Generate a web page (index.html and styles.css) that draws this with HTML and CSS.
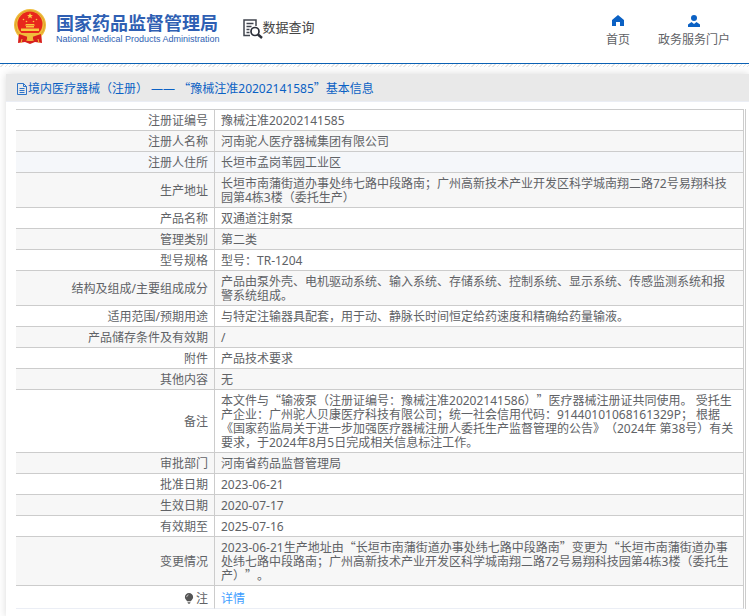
FILE: index.html
```html
<!DOCTYPE html>
<html lang="zh-CN">
<head>
	<meta charset="UTF-8">
	<meta name="viewport" content="width=device-width, initial-scale=1.0">
	<title>国家药品监督管理局 数据查询</title>
	<link rel="stylesheet" href="styles.css">
</head>
<body>
	<header class="header">
		<a class="brand" href="#">
			<svg class="emblem" viewBox="0 0 32 36" aria-hidden="true">
				<path d="M5 22L27 22L28 34L21 33L16 35L11 33L4 34Z" fill="#d8201c"/>
				<circle cx="16" cy="16" r="16" fill="#f0bd3c"/>
				<circle cx="16" cy="16" r="14.5" fill="none" stroke="#dfa32c"/>
				<circle cx="16" cy="15" r="12.5" fill="#e8281c"/>
				<path d="M16 4l.9 2H19l-1.700 1.300.7 2.200-2-1.300-2 1.300.7-2.200L13 6h2.100z" fill="#f9d548"/>
				<g fill="#f9c840">
					<circle cx="9.500" cy="10.500" r=".8"/>
					<circle cx="12.500" cy="12.500" r=".8"/>
					<circle cx="19.500" cy="12.500" r=".8"/>
					<circle cx="22.500" cy="10.500" r=".8"/>
					<path d="M12 15h8l1 1.500h-10zM12 17h8v1.500h-8zM7 19.500h18V22H7z"/>
				</g>
				<path d="M4 24h24l-3 4H7z" fill="#f0bd3c"/>
				<path d="M5 25q6 2 9 3l-2 4-7 1zM27 25q-6 2-9 3l2 4 7 1z" fill="#d8201c"/>
				<circle cx="16" cy="29" r="3" fill="#f0bd3c"/>
				<path d="M8 30l-1 4M24 30l1 4" stroke="#f0bd3c"/>
			</svg>
			<span class="brand-text">
				<span class="brand-cn">国家药品监督管理局</span>
				<span class="brand-en">National Medical Products Administration</span>
			</span>
		</a>
		<a class="query" href="#">
			<svg class="query-icon" viewBox="0 0 20 20" aria-hidden="true">
				<path d="M7 16.500H1V1h12v6M3.500 4.500h7M3.500 7.500h5M3.500 10.500h3M3.500 13.500h3" fill="none" stroke="#41454f" stroke-width="1.500"/>
				<circle cx="12" cy="12.500" r="4" fill="#fff" stroke="#2c303a" stroke-width="1.700"/>
				<path d="M15 15.500l4 3.500" stroke="#2c303a" stroke-width="2.500"/>
			</svg>
			数据查询
		</a>
		<nav class="nav">
			<a href="#">
				<svg class="nav-icon" viewBox="0 0 12 12" aria-hidden="true">
					<path d="M6 0l6 5v6H8V7H4v4H0V5z" fill="#0b61c4"/>
				</svg>
				首页
			</a>
			<a href="#">
				<svg class="nav-icon" viewBox="0 0 12 12" aria-hidden="true">
					<circle cx="6" cy="3" r="3" fill="#0b61c4"/>
					<path d="M0 12V9.500L3.500 7 6 9l2.500-2L12 9.500V12z" fill="#0b61c4"/>
				</svg>
				政务服务门户
			</a>
		</nav>
	</header>
	<div class="strip"></div>
	<main class="panel">
		<h1 class="panel-title">
			<svg class="doc-icon" viewBox="0 0 12 12" aria-hidden="true">
				<path d="M1.500 .5h6l3 3v8h-9zM7.500 .5v3h3M3.500 5.500h5M3.500 7.500h5M3.500 9.500h5" fill="none" stroke="#2f74c8"/>
			</svg>
			<span>境内医疗器械（注册） —— <span class="q">“</span>豫械注准20202141585<span class="q">”</span>基本信息</span>
		</h1>
		<div class="table-wrap">
			<table class="info">
				<tbody>
					<tr><th scope="row">注册证编号</th><td>豫械注准20202141585</td></tr>
					<tr><th scope="row">注册人名称</th><td>河南驼人医疗器械集团有限公司</td></tr>
					<tr class="active"><th scope="row">注册人住所</th><td>长垣市孟岗苇园工业区</td></tr>
					<tr><th scope="row">生产地址</th><td>长垣市南蒲街道办事处纬七路中段路南；广州高新技术产业开发区科学城南翔二路72号易翔科技园第4栋3楼（委托生产）</td></tr>
					<tr><th scope="row">产品名称</th><td>双通道注射泵</td></tr>
					<tr><th scope="row">管理类别</th><td>第二类</td></tr>
					<tr><th scope="row">型号规格</th><td>型号：TR-1204</td></tr>
					<tr><th scope="row">结构及组成/主要组成成分</th><td>产品由泵外壳、电机驱动系统、输入系统、存储系统、控制系统、显示系统、传感监测系统和报警系统组成。</td></tr>
					<tr><th scope="row">适用范围/预期用途</th><td>与特定注输器具配套，用于动、静脉长时间恒定给药速度和精确给药量输液。</td></tr>
					<tr><th scope="row">产品储存条件及有效期</th><td>/</td></tr>
					<tr><th scope="row">附件</th><td>产品技术要求</td></tr>
					<tr><th scope="row">其他内容</th><td>无</td></tr>
					<tr><th scope="row">备注</th><td>本文件与<span class="q">“</span>输液泵（注册证编号：豫械注准20202141586）<span class="q">”</span>医疗器械注册证共同使用。 受托生产企业：广州驼人贝康医疗科技有限公司；统一社会信用代码：91440101068161329P； 根据《国家药监局关于进一步加强医疗器械注册人委托生产监督管理的公告》（2024年 第38号）有关要求，于2024年8月5日完成相关信息标注工作。</td></tr>
					<tr><th scope="row">审批部门</th><td>河南省药品监督管理局</td></tr>
					<tr><th scope="row">批准日期</th><td>2023-06-21</td></tr>
					<tr><th scope="row">生效日期</th><td>2020-07-17</td></tr>
					<tr><th scope="row">有效期至</th><td>2025-07-16</td></tr>
					<tr><th scope="row">变更情况</th><td>2023-06-21生产地址由<span class="q">“</span>长垣市南蒲街道办事处纬七路中段路南<span class="q">”</span>变更为<span class="q">“</span>长垣市南蒲街道办事处纬七路中段路南；广州高新技术产业开发区科学城南翔二路72号易翔科技园第4栋3楼（委托生产）<span class="q">”</span>。</td></tr>
					<tr class="note">
						<th scope="row"><svg class="bulb" viewBox="0 0 10 12" aria-hidden="true"><path d="M5 0a4.500 4.500 0 0 1 4.500 4.500C9.500 6.500 7.500 7.500 7 9H3C2.500 7.500.5 6.500.5 4.500A4.500 4.500 0 0 1 5 0zM3.500 10h3v1L5 12l-1.500-1z" fill="#555"/><path d="M2.500 4.500Q2.500 2.500 4.500 2" fill="none" stroke="#ccc"/></svg>注</th>
						<td><a href="#">详情</a></td>
					</tr>
				</tbody>
			</table>
		</div>
	</main>
</body>
</html>
```

FILE: styles.css
```css
* {
	box-sizing: border-box;
}
body {
	margin: 0;
	background: #fff;
	color: #606266;
	font-family: "Noto Sans", "Noto Sans CJK SC", sans-serif;
	font-size: 12px;
	line-height: 14px;
	text-spacing-trim: space-all;
}
a {
	color: inherit;
	text-decoration: none;
}
.header {
	display: flex;
	align-items: flex-start;
	height: 64px;
	padding: 9px 19px 0 14px;
	border-bottom: 1px solid #0b61b4;
}
.strip {
	height: 3px;
	background: repeating-linear-gradient(135deg, #fff 0 2px, #e4e4e4 2px 3px);
}
.brand {
	display: flex;
	gap: 10px;
	color: #2f5fb3;
}
.emblem {
	width: 32px;
	height: 36px;
}
.brand-text {
	display: flex;
	flex-direction: column;
	padding-top: 2px;
	white-space: nowrap;
}
.brand-cn {
	font-family: "Noto Sans CJK SC", sans-serif;
	font-size: 18px;
	font-weight: bold;
	line-height: 22px;
}
.brand-en {
	font-family: "Liberation Sans", sans-serif;
	font-size: 9px;
	line-height: 12px;
}
.query {
	display: flex;
	margin-left: 23px;
	padding-top: 8px;
	color: #444;
	font-size: 13px;
	line-height: 20px;
	white-space: nowrap;
}
.query-icon {
	width: 20px;
	height: 20px;
	margin-top: 2px;
}
.nav {
	display: flex;
	gap: 28px;
	margin-left: auto;
	padding-top: 6px;
	white-space: nowrap;
}
.nav a {
	display: flex;
	flex-direction: column;
	align-items: center;
	gap: 6px;
}
.nav-icon {
	width: 12px;
	height: 12px;
}
.panel {
	margin: 7px 0 0 6px;
	background: #fff;
	box-shadow: 0 0 8px rgba(0, 0, 0, 0.15);
	padding-bottom: 8px;
}
.panel-title {
	display: flex;
	align-items: center;
	height: 28px;
	margin: 0;
	padding: 2px 10px 0;
	background: #e9e9e9;
	border-bottom: 1px solid #ebeef5;
	color: #0b61c4;
	font-size: 12px;
	font-weight: normal;
}
.doc-icon {
	width: 12px;
	height: 12px;
}
.q {
	font-family: "Noto Sans CJK SC", sans-serif;
	line-height: 0;
}
.table-wrap {
	margin: 7px 3px 0 10px;
	border-right: 1px solid #ccc;
	padding-right: 1px;
}
.info {
	width: 100%;
	table-layout: fixed;
	border-collapse: separate;
	border-spacing: 0;
	border-top: 1px solid #ccc;
}
.info th,
.info td {
	padding: 4px 6px 2px;
	border-right: 1px solid #ccc;
	border-bottom: 1px solid #ccc;
	font-weight: normal;
	text-align: left;
}
.info td {
	padding-right: 8px;
}
.info th {
	width: 199px;
	text-align: right;
}
.info tr:nth-child(even) {
	background: #f7f7f7;
}
.info .active {
	background: #f5f7fa;
}
.info .note th,
.info .note td {
	padding-top: 6px;
	border-bottom-color: #ebeef5;
}
.info a {
	color: #409eff;
}
.bulb {
	width: 10px;
	height: 11px;
	margin-right: 2px;
	vertical-align: -1px;
}
```
